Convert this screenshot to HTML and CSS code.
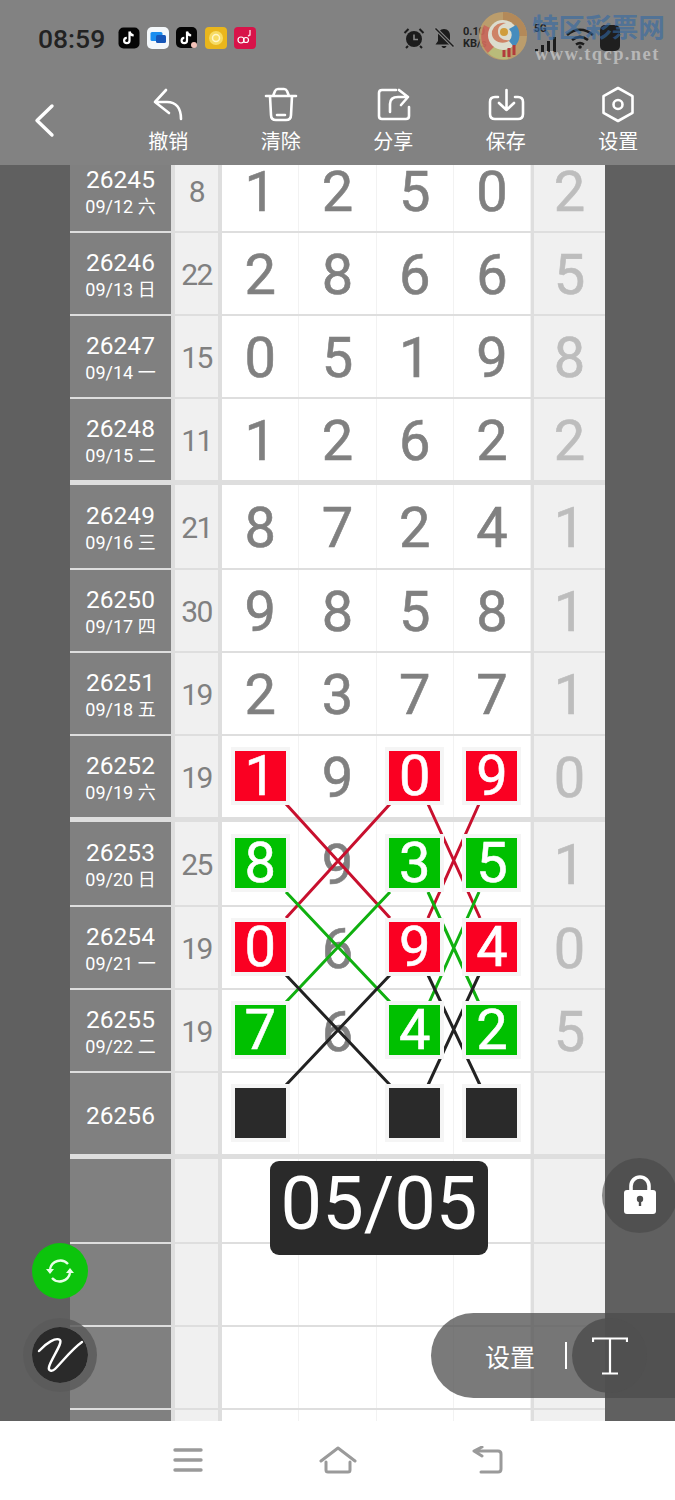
FILE: index.html
```html
<!DOCTYPE html>
<html lang="zh">
<head>
<meta charset="utf-8">
<title>26256</title>
<link rel="stylesheet" href="styles.css">
</head>
<body>
<header class="top">
  <div class="status">
    <span class="time">08:59</span>
    <div class="apps">
      <svg class="app" viewBox="0 0 22 22"><rect width="21" height="21" x="0.5" y="0.5" rx="5" fill="#050505"/><path d="M11.5 4.5v9a2.7 2.7 0 1 1-2.7-2.7M11.5 4.5c.4 2.4 2 3.8 4.2 4" fill="none" stroke="#fff" stroke-width="2.2"/></svg>
      <svg class="app" viewBox="0 0 22 22"><rect width="22" height="22" rx="5" fill="#f4f8fb"/><rect x="3.5" y="5" width="12" height="9" rx="1.5" fill="#1a8ef0"/><rect x="9" y="8" width="10" height="8" rx="1.5" fill="#1656b8"/></svg>
      <svg class="app" viewBox="0 0 22 22"><rect width="21" height="21" rx="5" fill="#050505"/><path d="M11 4.5v9a2.7 2.7 0 1 1-2.7-2.7M11 4.5c.4 2.4 2 3.8 4.2 4" fill="none" stroke="#fff" stroke-width="2.2"/><circle cx="18" cy="18" r="3" fill="#f3c2b8"/></svg>
      <svg class="app" viewBox="0 0 22 22"><rect width="22" height="22" rx="4" fill="#e9b61c"/><circle cx="11" cy="11" r="7" fill="#f7dc63"/><circle cx="11" cy="11" r="3.5" fill="none" stroke="#fff6c8" stroke-width="1.5"/></svg>
      <svg class="app" viewBox="0 0 22 22"><rect width="22" height="22" rx="4" fill="#d81349"/><circle cx="7" cy="13" r="3" fill="none" stroke="#fff" stroke-width="1.2"/><circle cx="12" cy="13" r="2.5" fill="none" stroke="#fff" stroke-width="1.2"/><path d="M16 3v5l-2 1" fill="none" stroke="#ffd1dd" stroke-width="1.4"/></svg>
    </div>
    <div class="sys">
      <svg class="sys-icon" viewBox="0 0 22 22"><circle cx="11" cy="12" r="8" fill="#1c1c1c"/><path d="M11 7.5v5h4" fill="none" stroke="#888" stroke-width="1.6"/><path d="M1.5 6 5.5 2M20.5 6l-4-4M5 19l-2 2M17 19l2 2" stroke="#1c1c1c" stroke-width="2"/></svg>
      <svg class="sys-icon" viewBox="0 0 22 22"><path d="M11 2c-4 0-6 3-6 6.500V14l-2.500 3.500h17L17 14V8.500C17 5 15 2 11 2ZM8.500 19c.5 1.500 1.500 2 2.500 2s2-.5 2.500-2Z" fill="#1c1c1c"/><path d="M2 1l19 19" stroke="#888" stroke-width="3.500"/><path d="M2.500 1.500l18 18" stroke="#1c1c1c" stroke-width="1.500"/></svg>
      <span class="speed">0.10<br>KB/s</span>
      <div class="signal"><span class="five-g">5G</span><svg class="bars" viewBox="0 0 24 16"><path d="M1 12h3v3H1ZM7 8h3v7H7ZM13 4h3v11h-3ZM19 0h3v15h-3Z" fill="#1c1c1c"/></svg></div>
      <svg class="wifi" viewBox="0 0 30 22"><path d="M2 8c8-7 18-7 26 0M7 13c5-4 11-4 16 0M11 17.500c3-2 5-2 8 0" fill="none" stroke="#1c1c1c" stroke-width="2.600"/><circle cx="15" cy="20" r="1.800" fill="#1c1c1c"/></svg>
      <span class="battery"></span>
    </div>
  </div>
  <div class="mark">
    <svg class="mark-logo" viewBox="0 0 50 50"><circle cx="25" cy="25" r="24" fill="#c2a06a"/><path d="M25 1a24 24 0 0 1 24 24H38A13 13 0 0 0 25 12Z" fill="#b98a55"/><path d="M6 14a24 24 0 0 0 4 28l8-8a12 12 0 0 1-2-15Z" fill="#cf6a5a"/><path d="M10 42a24 24 0 0 0 20 6l-2-12a12 12 0 0 1-10-2Z" fill="#bfc27a"/><circle cx="25" cy="24" r="15" fill="#e6e6d6"/><path d="M38 14a16 16 0 0 1-2 22l-5-6a8 8 0 0 0 0-12Z" fill="#3f8ec4"/><path d="M14 20a12 12 0 0 1 14-8c-7 2-8 5-8 9 0 6 6 9 12 8-6 6-20 2-18-9Z" fill="#d3724f" opacity=".85"/><circle cx="26" cy="21" r="4" fill="#d9a034"/><path d="M31 37v9M36 34v10M26 39v7" stroke="#b83434" stroke-width="3"/></svg>
    <div class="mark-text">
      <span class="mark-cn">特区彩票网</span>
      <span class="mark-en">www.tqcp.net</span>
    </div>
  </div>
  <nav class="toolbar">
    <button class="tool back"><svg viewBox="32 100 26 40" class="chev"><path d="M52 106 37 120.500 52 135" fill="none" stroke="#fff" stroke-width="3.400" stroke-linecap="round" stroke-linejoin="round"/></svg></button>
    <button class="tool"><svg class="tool-icon" viewBox="146 85 44 40"><path d="M166 90 155 102l14 11M155 102h12c9 0 14 6 14 17" fill="none" stroke="#fff" stroke-width="2.600" stroke-linecap="round" stroke-linejoin="round"/></svg><span>撤销</span></button>
    <button class="tool"><svg class="tool-icon" viewBox="259 85 44 40"><path d="M266 96h30M273 96l2-5q1-2 3-2h6q2 0 3 2l2 5M270 96l1 19q0 5 5 5h10q5 0 5-5l1-19M277 115h8" fill="none" stroke="#fff" stroke-width="2.600" stroke-linecap="round" stroke-linejoin="round"/></svg><span>清除</span></button>
    <button class="tool"><svg class="tool-icon" viewBox="371 85 44 40"><path d="M396 90h-14q-3 0-3 3v23q0 3 3 3h24q3 0 3-3v-9M390 112v-8q0-7 8-7h10M399 90l9 7-7 8" fill="none" stroke="#fff" stroke-width="2.600" stroke-linecap="round" stroke-linejoin="round"/></svg><span>分享</span></button>
    <button class="tool"><svg class="tool-icon" viewBox="484 85 44 40"><path d="M498 97h-3q-5 0-5 5v12q0 5 5 5h23q5 0 5-5v-12q0-5-5-5h-3M506.500 90v20M499 103l7.500 7 7.500-7" fill="none" stroke="#fff" stroke-width="2.600" stroke-linecap="round" stroke-linejoin="round"/></svg><span>保存</span></button>
    <button class="tool"><svg class="tool-icon" viewBox="596 85 44 40"><path d="m618 88 14.500 8.200v16.600L618 121l-14.500-8.200V96.200Z" fill="none" stroke="#fff" stroke-width="2.600" stroke-linejoin="round"/><circle cx="618" cy="104.500" r="4.500" fill="none" stroke="#fff" stroke-width="2.600"/></svg><span>设置</span></button>
  </nav>
</header>

<main class="board">
  <div class="side"></div>
  <div class="table">
    <div class="row"><div class="id"><b>26245</b><i>09/12 六</i></div><div class="sum">8</div><div class="num">1</div><div class="num">2</div><div class="num">5</div><div class="num">0</div><div class="last">2</div></div>
    <div class="row"><div class="id"><b>26246</b><i>09/13 日</i></div><div class="sum">22</div><div class="num">2</div><div class="num">8</div><div class="num">6</div><div class="num">6</div><div class="last">5</div></div>
    <div class="row"><div class="id"><b>26247</b><i>09/14 一</i></div><div class="sum">15</div><div class="num">0</div><div class="num">5</div><div class="num">1</div><div class="num">9</div><div class="last">8</div></div>
    <div class="row end"><div class="id"><b>26248</b><i>09/15 二</i></div><div class="sum">11</div><div class="num">1</div><div class="num">2</div><div class="num">6</div><div class="num">2</div><div class="last">2</div></div>

    <div class="row start"><div class="id"><b>26249</b><i>09/16 三</i></div><div class="sum">21</div><div class="num">8</div><div class="num">7</div><div class="num">2</div><div class="num">4</div><div class="last">1</div></div>
    <div class="row"><div class="id"><b>26250</b><i>09/17 四</i></div><div class="sum">30</div><div class="num">9</div><div class="num">8</div><div class="num">5</div><div class="num">8</div><div class="last">1</div></div>
    <div class="row"><div class="id"><b>26251</b><i>09/18 五</i></div><div class="sum">19</div><div class="num">2</div><div class="num">3</div><div class="num">7</div><div class="num">7</div><div class="last">1</div></div>
    <div class="row end"><div class="id"><b>26252</b><i>09/19 六</i></div><div class="sum">19</div><div class="num"><span class="box red">1</span></div><div class="num">9</div><div class="num"><span class="box red">0</span></div><div class="num"><span class="box red">9</span></div><div class="last">0</div></div>

    <div class="row start"><div class="id"><b>26253</b><i>09/20 日</i></div><div class="sum">25</div><div class="num"><span class="box green">8</span></div><div class="num">9</div><div class="num"><span class="box green">3</span></div><div class="num"><span class="box green">5</span></div><div class="last">1</div></div>
    <div class="row"><div class="id"><b>26254</b><i>09/21 一</i></div><div class="sum">19</div><div class="num"><span class="box red">0</span></div><div class="num">6</div><div class="num"><span class="box red">9</span></div><div class="num"><span class="box red">4</span></div><div class="last">0</div></div>
    <div class="row"><div class="id"><b>26255</b><i>09/22 二</i></div><div class="sum">19</div><div class="num"><span class="box green">7</span></div><div class="num">6</div><div class="num"><span class="box green">4</span></div><div class="num"><span class="box green">2</span></div><div class="last">5</div></div>
    <div class="row end"><div class="id"><b>26256</b></div><div class="sum"></div><div class="num"><span class="box dark"></span></div><div class="num"></div><div class="num"><span class="box dark"></span></div><div class="num"><span class="box dark"></span></div><div class="last"></div></div>

    <div class="row start"><div class="id"></div><div class="sum"></div><div class="num"></div><div class="num"></div><div class="num"></div><div class="num"></div><div class="last"></div></div>
    <div class="row"><div class="id"></div><div class="sum"></div><div class="num"></div><div class="num"></div><div class="num"></div><div class="num"></div><div class="last"></div></div>
    <div class="row"><div class="id"></div><div class="sum"></div><div class="num"></div><div class="num"></div><div class="num"></div><div class="num"></div><div class="last"></div></div>
    <div class="row"><div class="id"></div><div class="sum"></div><div class="num"></div><div class="num"></div><div class="num"></div><div class="num"></div><div class="last"></div></div>
  </div>
  <div class="side"></div>

  <svg class="links" viewBox="0 165 675 1256">
    <g class="l-red"><path d="M286 804 390 918M390 804 286 918M428 804 480 918M479 804 428 918"/></g>
    <g class="l-green"><path d="M286 892 390 1002M390 892 286 1002M428 892 480 1005M479 892 428 1005"/></g>
    <g class="l-black"><path d="M286 975 390 1085M390 975 286 1085M428 975 480 1085M479 975 428 1085"/></g>
  </svg>

  <div class="badge">05/05</div>
  <button class="fab sync"><svg viewBox="0 0 32 32" class="fab-svg"><path d="M6 14a10.500 10.500 0 0 1 18-5M26 18a10.500 10.500 0 0 1-18 5" fill="none" stroke="#e6ffe6" stroke-width="2.400"/><path d="M2 14h8l-4 5ZM30 18h-8l4-5Z" fill="#e6ffe6"/></svg></button>
  <button class="fab pen"><svg viewBox="0 0 56 56" class="pen-svg"><path d="M7 24C14 16 24 10 28 13 31 16 19 32 17 40c-1 4 3 5 6 2C30 35 40 22 50 15" fill="none" stroke="#fff" stroke-width="2.400" stroke-linecap="round"/></svg></button>
  <button class="fab lock"><svg viewBox="0 0 40 46" class="lock-svg"><path d="M11 20v-7a9 9 0 0 1 18 0v7" fill="none" stroke="#fff" stroke-width="3.600"/><rect x="4" y="17" width="32" height="24" rx="3" fill="#fff"/><circle cx="20" cy="26" r="3.200" fill="#4a4a4a"/><path d="M20 27v6" stroke="#4a4a4a" stroke-width="2.400"/></svg></button>
  <div class="pill">
    <span class="pill-label">设置</span>
    <span class="pill-rule"></span>
    <span class="pill-t"><svg viewBox="0 0 36 38" class="t-svg"><path d="M1 5V1.500h34V5M18 1.500v35M10 36.500h16" fill="none" stroke="#fff" stroke-width="2.200"/></svg></span>
  </div>
</main>

<footer class="nav">
  <div class="nav-item"><svg viewBox="0 0 32 28" class="nav-icon"><path d="M3 4h26M3 14h26M3 24h26" stroke="#9a9a9a" stroke-width="3.400" stroke-linecap="round"/></svg></div>
  <div class="nav-item"><svg viewBox="0 0 38 28" class="nav-icon wide"><path d="M2 15 19 2l17 13M7 16v8q0 2 2 2h20q2 0 2-2v-8" fill="none" stroke="#9a9a9a" stroke-width="3" stroke-linecap="round" stroke-linejoin="round"/></svg></div>
  <div class="nav-item"><svg viewBox="0 0 32 28" class="nav-icon"><path d="M2 5h24q3 0 3 3v15q0 3-3 3H9M10 1 2 5l8 5" fill="none" stroke="#9a9a9a" stroke-width="3" stroke-linecap="round" stroke-linejoin="round"/></svg></div>
</footer>
</body>
</html>
```
FILE: styles.css
```css
* { box-sizing: border-box; }
html, body { margin: 0; padding: 0; }
body {
  width: 675px;
  height: 1500px;
  display: flex;
  flex-direction: column;
  overflow: hidden;
  background: #fff;
  font-family: Roboto, "Noto Sans CJK SC", sans-serif;
}
button { border: 0; padding: 0; background: none; font: inherit; color: inherit; }

/* header */
.top { position: relative; height: 165px; flex: none; background: #828282; color: #fff; }
.status { display: flex; align-items: center; height: 76px; padding: 0 55px 0 38px; margin-bottom: 9px; }
.time { font-size: 26.5px; font-weight: 500; color: #222; width: 80px; }
.apps { display: flex; gap: 7px; }
.app { width: 22px; height: 22px; display: block; }
.sys { display: flex; align-items: center; margin-left: auto; }
.sys-icon { width: 22px; height: 22px; margin-right: 8px; }
.speed { width: 71px; font-size: 11px; line-height: 12px; font-weight: 700; color: #222; }
.signal { position: relative; width: 25px; height: 30px; }
.five-g { position: absolute; left: 0; top: 0; font-size: 10px; font-weight: 700; color: #222; }
.bars { position: absolute; left: 0; bottom: 0; width: 24px; height: 16px; }
.wifi { width: 30px; height: 22px; margin-left: 6px; }
.battery { width: 20px; height: 26px; margin-left: 5px; border-radius: 5px; background: #1f1f1f; }
.mark { position: absolute; left: 478px; top: 11px; display: flex; gap: 4px; }
.mark-logo { width: 50px; height: 50px; opacity: .9; }
.mark-text { display: flex; flex-direction: column; }
.mark-cn { font-size: 26.6px; line-height: 33px; font-weight: 700; color: rgba(50, 105, 165, .62); }
.mark-en { font-family: "Liberation Serif", serif; font-size: 18.5px; line-height: 20px; font-weight: 700; letter-spacing: 1.4px; color: rgba(205, 205, 205, .72); padding-left: 3px; white-space: nowrap; }

.toolbar { display: grid; grid-template-columns: 112px repeat(5, 112.5px); height: 80px; }
.tool { display: flex; flex-direction: column; align-items: center; color: #fff; }
.tool span { font-size: 20px; line-height: 24px; margin-top: 5px; }
.tool-icon { width: 44px; height: 40px; display: block; }
.back { align-items: flex-start; }
.chev { width: 26px; height: 40px; margin: 15px 0 0 32px; }

/* table */
.board { position: relative; display: flex; flex: none; height: 1256px; overflow: hidden; background: #606060; }
.side { width: 70px; flex: none; }
.table { width: 535px; flex: none; margin-top: -15px; background: #fff; }
.row { display: flex; height: 83px; border-bottom: 2px solid #dedede; background: #dedede; }
.row.end { height: 86px; border-bottom-width: 5px; }
.row.start { height: 85px; }
.id {
  width: 101px;
  flex: none;
  display: flex;
  flex-direction: column;
  align-items: center;
  justify-content: center;
  padding-top: 4px;
  background: #808080;
  color: #fff;
}
.id b { font-size: 24.5px; line-height: 28px; font-weight: 400; }
.id i { font-size: 18px; line-height: 26px; font-style: normal; white-space: nowrap; }
.sum {
  width: 43px;
  flex: none;
  margin: 0 4px;
  display: flex;
  align-items: center;
  justify-content: center;
  background: #f0f0f0;
  color: #808080;
  font-size: 30px;
  letter-spacing: -1.5px;
  padding-top: 1px;
}
.num {
  width: 77.25px;
  flex: none;
  display: flex;
  align-items: center;
  justify-content: center;
  padding-top: 3px;
  background: #fff;
  border-right: 1px solid #f2f2f2;
  color: #808080;
  font-size: 56px;
  font-weight: 400;
  -webkit-text-stroke: .6px currentColor;
}
.last {
  flex: 1;
  margin-left: 3px;
  display: flex;
  align-items: center;
  justify-content: center;
  padding-top: 3px;
  background: #f0f0f0;
  color: #bdbdbd;
  font-size: 56px;
  font-weight: 400;
  -webkit-text-stroke: .6px currentColor;
}
.box {
  position: relative;
  top: -2px;
  z-index: 2;
  width: 51px;
  height: 50px;
  display: flex;
  align-items: center;
  justify-content: center;
  color: #fff;
  box-shadow: 0 0 0 4px #f5f5f5;
}
.red { background: #fa0022; }
.green { background: #00c000; }
.dark { background: #2a2a2a; }

/* overlays */
.links { position: absolute; left: 0; top: 0; width: 675px; height: 1256px; z-index: 1; fill: none; stroke-width: 3; }
.l-red { stroke: #c8102e; }
.l-green { stroke: #10b010; }
.l-black { stroke: #222; }
.badge {
  position: absolute;
  z-index: 3;
  left: 270px;
  top: 996px;
  width: 218px;
  height: 94px;
  border-radius: 9px;
  background: #2a2a2a;
  color: #fff;
  font-size: 74px;
  font-weight: 400;
  line-height: 86px;
  text-align: center;
}
.fab { position: absolute; z-index: 3; display: flex; align-items: center; justify-content: center; border-radius: 50%; }
.sync { left: 32px; top: 1078px; width: 56px; height: 56px; background: #0cc40c; }
.fab-svg { width: 32px; height: 32px; }
.pen { left: 23px; top: 1153px; width: 74px; height: 74px; background: #2a2a2a; border: 9px solid rgba(90, 90, 90, .85); background-clip: padding-box; }
.pen-svg { width: 56px; height: 56px; flex: none; }
.lock { left: 602px; top: 993px; width: 75px; height: 75px; background: rgba(70, 70, 70, .6); }
.lock-svg { width: 40px; height: 46px; }
.pill {
  position: absolute;
  z-index: 3;
  left: 431px;
  top: 1148px;
  width: 244px;
  height: 85px;
  display: flex;
  align-items: center;
  padding-left: 54px;
  border-radius: 43px 0 0 43px;
  background: rgba(75, 75, 75, .74);
  color: #fff;
}
.pill-label { font-size: 25px; width: 80px; }
.pill-rule { width: 2px; height: 27px; background: #fff; }
.pill-t {
  position: absolute;
  left: 141px;
  top: 5px;
  width: 75px;
  height: 75px;
  display: flex;
  align-items: center;
  justify-content: center;
  border-radius: 50%;
  background: rgba(80, 80, 80, .88);
}
.t-svg { width: 36px; height: 38px; }

/* nav */
.nav { flex: 1; display: flex; justify-content: center; align-items: center; background: #fff; padding-bottom: 1px; }
.nav-item { width: 150px; display: flex; justify-content: center; }
.nav-icon { width: 32px; height: 28px; display: block; }
.nav-icon.wide { width: 38px; }
```
